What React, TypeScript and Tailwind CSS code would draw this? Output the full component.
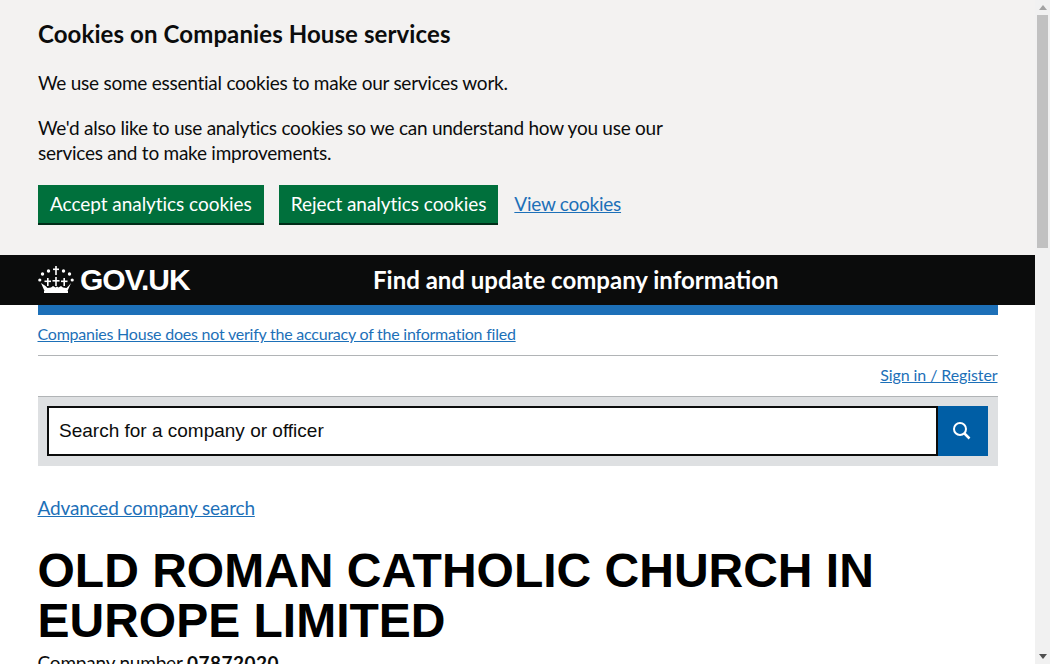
import React from "react";

const bodyFont = "font-['Lato',sans-serif]";

function CrownLogo() {
  return (
    <svg width="36" height="27" viewBox="0 0 36 27" fill="#fff" className="shrink-0 -mt-[1px]">
      <rect x="17.2" y="0" width="1.6" height="9" />
      <rect x="15" y="2.500" width="6" height="1.600" />
      <circle cx="10.500" cy="5" r="1.700" />
      <circle cx="25.500" cy="5" r="1.700" />
      <circle cx="4.500" cy="8" r="1.700" />
      <circle cx="31.500" cy="8" r="1.700" />
      <circle cx="1.800" cy="14" r="1.600" />
      <circle cx="34.200" cy="14" r="1.600" />
      <rect x="17.200" y="11" width="1.600" height="9" />
      <rect x="14.500" y="14" width="7" height="1.600" />
      <rect x="9" y="12" width="1.600" height="8" />
      <rect x="6.500" y="14.500" width="6.500" height="1.600" />
      <rect x="25.400" y="12" width="1.600" height="8" />
      <rect x="23" y="14.500" width="6.500" height="1.600" />
      <path d="M3 17l3.500 8h23l3.500-8-2.500 3-2 2-3.500-.5-2-1.500-2.500 1.500-1.500-1-1.500 1-2.500-1.500-2 1.500-3.500.5-2-2z" />
      <rect x="6" y="25" width="24" height="2" />
    </svg>
  );
}

function CookieButton({ label }: { label: string }) {
  return (
    <button className="h-10 px-3 bg-[#00703c] text-white text-[19px] leading-[38px] tracking-[-0.05px] border-b-2 border-[#002d18]">
      {label}
    </button>
  );
}

function CookieBanner() {
  return (
    <div className="h-[255px] bg-[#f3f2f1] text-[#0b0c0c] pl-[38px] pt-[19px]">
      <h2 className="text-[24px] leading-[30px] font-bold tracking-[0.1px]">Cookies on Companies House services</h2>
      <p className="mt-[21px] text-[19px] leading-[25px] tracking-[-0.25px]">We use some essential cookies to make our services work.</p>
      <p className="mt-5 text-[19px] leading-[25px] w-[640px] tracking-[-0.25px]">
        We'd also like to use analytics cookies so we can understand how you use our services and to make improvements.
      </p>
      <div className="mt-5 flex items-center gap-[15px]">
        <CookieButton label="Accept analytics cookies" />
        <CookieButton label="Reject analytics cookies" />
        <a className="ml-[1px] text-[19px] leading-[25px] pb-[4px] text-[#1d70b8] underline tracking-[-0.25px]">View cookies</a>
      </div>
    </div>
  );
}

function Header() {
  return (
    <div className="h-[50px] bg-[#0b0c0c] text-white flex items-center pl-[38px]">
      <CrownLogo />
      <span className="ml-[6px] w-[293px] text-[30px] pb-[1px] font-bold font-['Liberation_Sans',sans-serif] tracking-[-1px]">GOV.UK</span>
      <span className="text-[24px] pb-[1px] font-bold">Find and update company information</span>
    </div>
  );
}

function SearchBar() {
  return (
    <div className="h-[70px] bg-[#dee0e2] border-t border-[#b1b4b6] pt-[9px] pl-[9px] pr-[9.5px] flex">
      <div className="flex-1 h-[50px] bg-white border-2 border-[#0b0c0c] pl-[10.5px] flex items-center text-[19px] font-['Liberation_Sans',sans-serif] text-[#0b0c0c]">
        Search for a company or officer
      </div>
      <div className="w-[50px] h-[50px] bg-[#005ea5] flex items-center justify-center">
        <svg width="20" height="20" viewBox="0 0 20 20" fill="none" stroke="#fff" strokeWidth="2" className="-ml-[2px]">
          <circle cx="8" cy="8" r="6" />
          <path d="M12.500 12.500l5 5" strokeWidth="2.500" />
        </svg>
      </div>
    </div>
  );
}

function Scrollbar() {
  return (
    <div className="w-[15px] h-full shrink-0 bg-[#f1f1f1] flex flex-col items-center justify-between">
      <div className="w-full flex flex-col items-center">
        <svg width="8" height="15" viewBox="0 0 8 15" fill="#a3a3a3"><path d="M4 5l4 5H0z" /></svg>
        <div className="w-[11px] h-[233px] bg-[#c1c1c1]" />
      </div>
      <svg width="8" height="15" viewBox="0 0 8 15" fill="#505050"><path d="M0 5h8l-4 5z" /></svg>
    </div>
  );
}

export default function App() {
  return (
    <div className={`w-[1050px] h-[664px] overflow-hidden flex bg-white ${bodyFont}`}>
      <div className="w-[1035px] shrink-0">
        <CookieBanner />
        <Header />
        <div className="w-[960px] ml-[37.5px]">
          <div className="h-[10px] bg-[#1d70b8]" />
          <div className="h-[41px] border-b border-[#b1b4b6] pt-[9px] text-[16px] leading-5 tracking-[-0.23px]">
            <a className="text-[#1d70b8] underline">Companies House does not verify the accuracy of the information filed</a>
          </div>
          <div className="h-[40px] flex justify-end pt-[9px] text-[16px] leading-5 tracking-[-0.1px]">
            <a className="text-[#1d70b8] underline">Sign in / Register</a>
          </div>
          <SearchBar />
          <a className="block mt-[29px] text-[19px] leading-[25px] text-[#1d70b8] underline tracking-[-0.17px]">Advanced company search</a>
          <h1 className="mt-[26px] text-[48px] leading-[50px] font-bold font-['Liberation_Sans',sans-serif] text-[#000]">
            OLD ROMAN CATHOLIC CHURCH IN EUROPE LIMITED
          </h1>
          <p className="mt-[4px] text-[19px] leading-[25px] text-[#0b0c0c] tracking-[-0.2px]">
            Company number <strong className="font-bold tracking-[0.5px]">07872020</strong>
          </p>
        </div>
      </div>
      <Scrollbar />
    </div>
  );
}
